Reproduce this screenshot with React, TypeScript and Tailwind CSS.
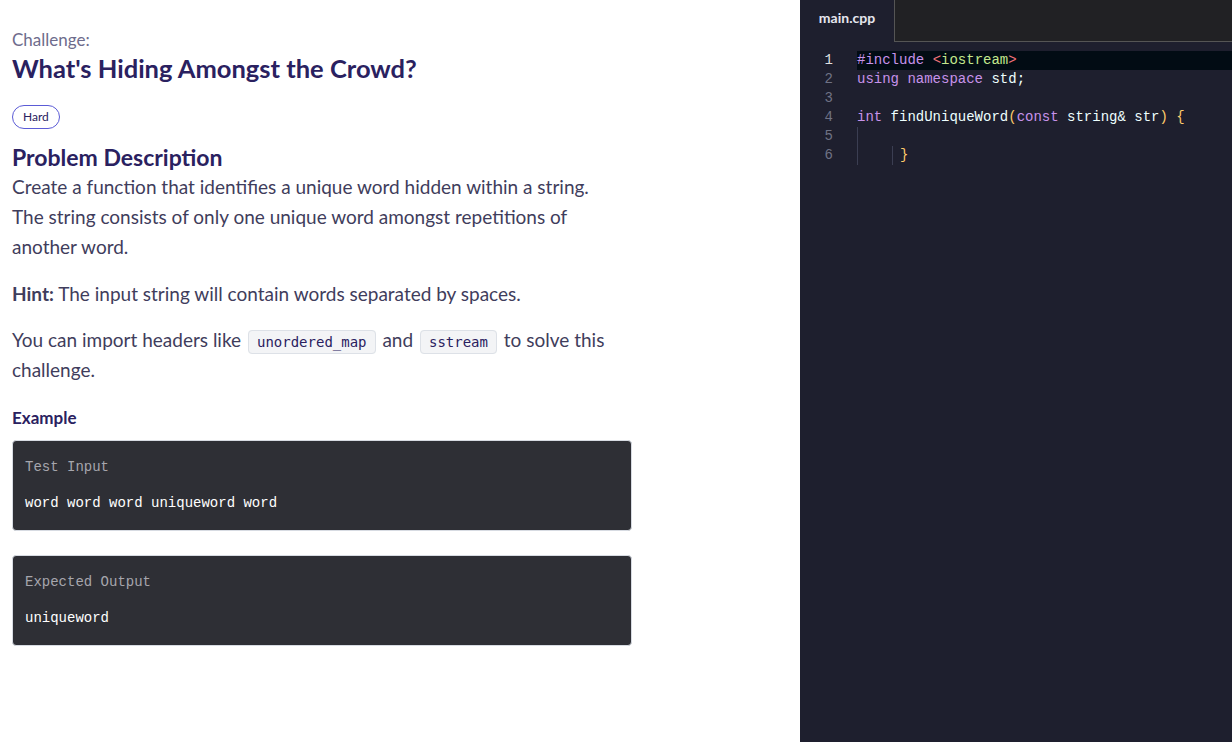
import React from "react";

const mono = { fontFamily: "'Liberation Mono', 'DejaVu Sans Mono', monospace" };

// one token of highlighted code
type Tok = [string, string];

const codeLines: Tok[][] = [
  [["#include ", "text-[#c792ea]"], ["<", "text-[#f07178]"], ["iostream", "text-[#c3e88d]"], [">", "text-[#f07178]"]],
  [["using namespace ", "text-[#c792ea]"], ["std;", "text-[#eeffff]"]],
  [],
  [
    ["int ", "text-[#c792ea]"],
    ["findUniqueWord", "text-[#eeffff]"],
    ["(", "text-[#ffcb6b]"],
    ["const ", "text-[#c792ea]"],
    ["string& str", "text-[#eeffff]"],
    [")", "text-[#ffcb6b]"],
    [" {", "text-[#ffcb6b]"],
  ],
  [],
  [["}", "text-[#ffcb6b]"]],
];

const ExampleBox = ({ label, value }: { label: string; value: string }) => (
  <div className="w-[620px] rounded border border-[#d7dbe2] bg-[#2e2f35] px-3 pt-[16px] pb-[17px] text-[14px]" style={mono}>
    <div className="leading-[20px] text-[#a6a6ad]">{label}</div>
    <div className="mt-4 leading-[20px] text-white">{value}</div>
  </div>
);

const Code = ({ children }: { children: React.ReactNode }) => (
  <code
    className="mx-[2px] rounded border border-[#dde1e7] bg-[#f3f4f6] px-[8px] py-[3px] leading-none text-[#2a2160]"
    style={{ fontFamily: "'DejaVu Sans Mono', monospace", fontSize: 14 }}
  >
    {children}
  </code>
);

export default function App() {
  return (
    <div className="flex h-[742px] w-[1232px] overflow-hidden" style={{ fontFamily: "Lato, 'Noto Sans', sans-serif" }}>
      <div className="w-[800px] bg-white px-3 pt-[30px]">
        <div className="text-[17px] leading-[20px] text-[#6e6c8c]">Challenge:</div>
        <h1 className="mt-[1px] text-[25.5px] font-bold leading-[34px] text-[#2a2160]">What's Hiding Amongst the Crowd?</h1>
        <div className="mt-[20px] flex">
          <span className="rounded-full border border-[#5b5bd6] px-[10px] text-[12px] leading-[22px] text-[#2a2160]">Hard</span>
        </div>
        <h2 className="mt-[14px] text-[23px] font-bold leading-[28px] text-[#2a2160]">Problem Description</h2>
        <div className="text-[19px] leading-[30px] text-[#3f3d5c]">
          <p className="mt-[1px] w-[605px]">
            Create a function that identifies a unique word hidden within a string. The string consists of only one unique word
            amongst repetitions of another word.
          </p>
          <p className="mt-[17px]">
            <b className="font-bold">Hint:</b> The input string will contain words separated by spaces.
          </p>
          <p className="mt-[16px] w-[605px]">
            You can import headers like <Code>unordered_map</Code> and <Code>sstream</Code> to solve this challenge.
          </p>
        </div>
        <div className="mt-[23px] text-[17px] font-bold leading-[20px] text-[#2a2160]">Example</div>
        <div className="mt-[12px] flex flex-col gap-[24px]">
          <ExampleBox label="Test Input" value="word word word uniqueword word" />
          <ExampleBox label="Expected Output" value="uniqueword" />
        </div>
      </div>

      <div className="flex w-[432px] flex-col bg-[#1e1f2e]">
        <div className="flex h-[42px] bg-[#212124]">
          <div className="w-[94px] bg-[#1e1f2e] pt-[8px] text-center text-[14px] font-bold leading-[20px] text-[#e6e6ee]">
            main.cpp
          </div>
          <div className="flex-1 border-b border-l border-[#555]" />
        </div>
        <div className="pt-[9px] text-[14px]" style={mono}>
          {codeLines.map((line, i) => (
            <div key={i} className="flex h-[19px] items-center leading-[19px]">
              <div className={`w-[33px] text-right ${i === 0 ? "text-[#e0e0e0]" : "text-[#6f7285]"}`}>{i + 1}</div>
              <div className={`ml-[24px] flex h-full flex-1 items-center whitespace-pre ${i === 0 ? "bg-[#020c14]" : ""}`}>
                {(i === 4 || i === 5) && <span className="h-full w-px bg-[#3b3e52]" />}
                {i === 5 && <span className="ml-[34px] mr-[7px] h-full w-px bg-[#3b3e52]" />}
                {line.map(([t, c], j) => (
                  <span key={j} className={c}>
                    {t}
                  </span>
                ))}
              </div>
            </div>
          ))}
        </div>
      </div>
    </div>
  );
}
